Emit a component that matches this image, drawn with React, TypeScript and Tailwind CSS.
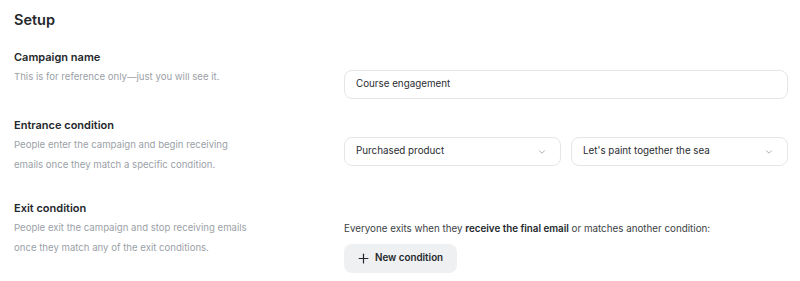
import { ChevronDown, Plus } from "lucide-react";

const Select = ({ value }: { value: string }) => (
  <div className="flex h-[29px] flex-1 items-center justify-between rounded-lg border border-[#e4e6e8] bg-white pl-[11px] pr-[13px] text-[9.8px] text-[#2a2d31]">
    <span>{value}</span>
    <ChevronDown className="h-[10px] w-[10px] text-[#8d9399]" strokeWidth={1.75} />
  </div>
);

const Label = ({ title, children }: { title: string; children: React.ReactNode }) => (
  <div>
    <h3 className="text-[11px] font-semibold leading-[18px] text-[#24272b]">{title}</h3>
    <p className="mt-[1px] w-[240px] text-[9.6px] leading-[20px] text-[#9ba1a7]">{children}</p>
  </div>
);

export default function App() {
  return (
    <div className="min-h-screen bg-white pl-[14px] pr-[12px] pt-[9px]" style={{ fontFamily: "Inter, 'Noto Sans', sans-serif" }}>
      <h1 className="text-[14.5px] font-semibold leading-[22px] text-[#24272b]">Setup</h1>

      <div className="mt-[17px] grid grid-cols-[330px_1fr] items-start">
        <Label title="Campaign name">This is for reference only—just you will see it.</Label>
        <div className="pt-[22px]">
          <div className="flex h-[29px] items-center rounded-lg border border-[#e4e6e8] bg-white px-[11px] text-[9.8px] text-[#2a2d31]">
            Course engagement
          </div>
        </div>
      </div>

      <div className="mt-[17px] grid grid-cols-[330px_1fr] items-start">
        <Label title="Entrance condition">
          People enter the campaign and begin receiving emails once they match a specific condition.
        </Label>
        <div className="flex gap-[10px] pt-[21px]">
          <Select value="Purchased product" />
          <Select value="Let's paint together the sea" />
        </div>
      </div>

      <div className="mt-[24px] grid grid-cols-[330px_1fr] items-start">
        <Label title="Exit condition">
          People exit the campaign and stop receiving emails once they match any of the exit conditions.
        </Label>
        <div className="pt-[20px]">
          <p className="text-[9.8px] leading-[20px] text-[#3b3f44]">
            Everyone exits when they <span className="font-semibold text-[#24272b]">receive the final email</span> or
            matches another condition:
          </p>
          <button className="mt-[5px] flex h-[29px] items-center gap-[4px] rounded-lg bg-[#eef0f1] pl-[12px] pr-[14px] text-[9.8px] font-semibold text-[#24272b]">
            <Plus className="h-[15px] w-[15px]" strokeWidth={1.9} />
            New condition
          </button>
        </div>
      </div>
    </div>
  );
}
